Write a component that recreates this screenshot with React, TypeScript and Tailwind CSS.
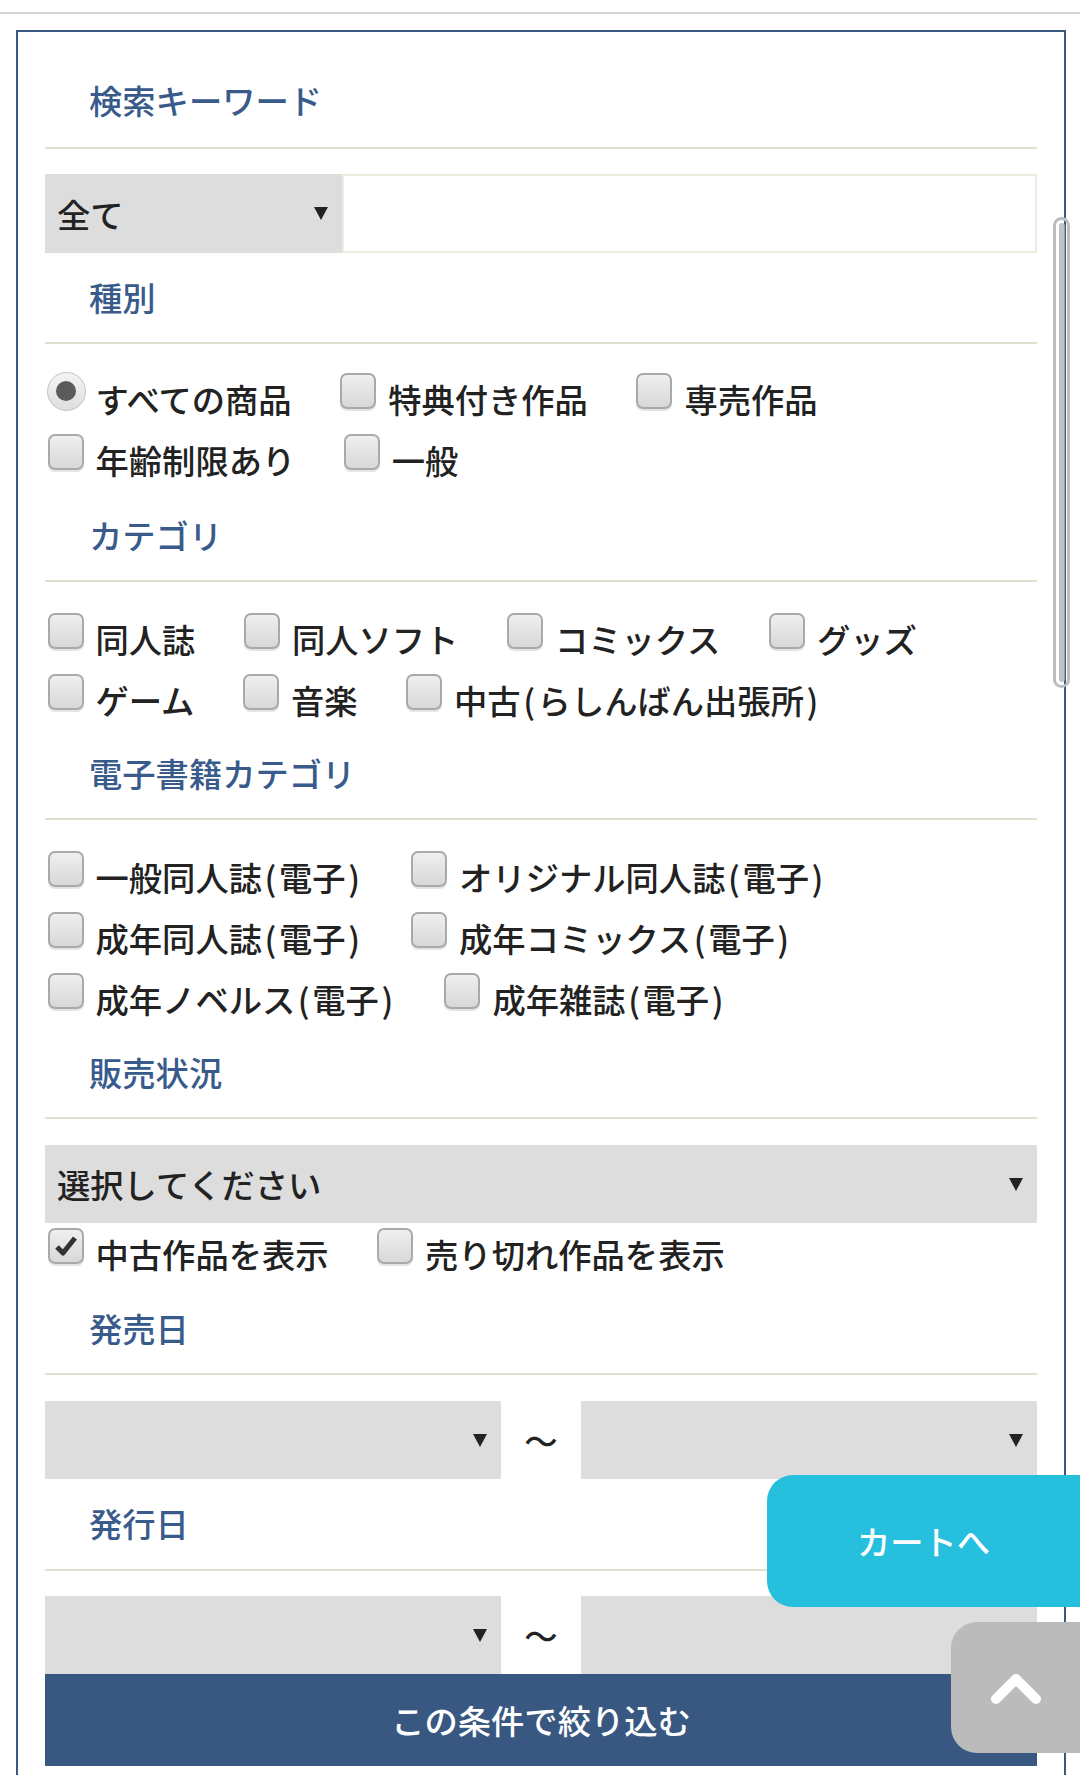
import React from "react";

const Tri = () => (
  <svg width="14" height="13" viewBox="0 0 14 13">
    <path d="M0 0h14L7 13z" fill="#222" />
  </svg>
);

// splits half-width parens out so they get the wider spacing of the original font
const Label = ({ text }: { text: string }) => {
  const parts = text.split(/([()])/);
  return (
    <span className="whitespace-nowrap">
      {parts.map((p, i) =>
        p === "(" || p === ")" ? (
          <span key={i} className="inline-block w-[17px] text-center">
            {p}
          </span>
        ) : (
          <span key={i}>{p}</span>
        )
      )}
    </span>
  );
};

const Box = ({ checked = false }: { checked?: boolean }) => (
  <span className="ml-[2.5px] mb-[16px] flex h-[36px] w-[36px] shrink-0 items-center justify-center rounded-[7px] border-2 border-[#a9a9a9] bg-gradient-to-b from-[#efefef] to-[#d8d8d8] shadow-[0_2px_0_#e4e4e4]">
    {checked && (
      <svg width="26" height="24" viewBox="0 0 26 24">
        <path d="M4 13l6 6L22 4" fill="none" stroke="#333" strokeWidth="5" strokeLinejoin="round" />
      </svg>
    )}
  </span>
);

const Radio = () => (
  <span className="ml-[1.5px] mb-[16px] flex h-[39px] w-[39px] shrink-0 items-center justify-center rounded-full border border-[#c2c2c2] bg-gradient-to-b from-[#f4f4f4] to-[#dedede]">
    <span className="h-[20px] w-[20px] rounded-full bg-[#5b5b5b]" />
  </span>
);

const Item = ({ text, checked, radio }: { text: string; checked?: boolean; radio?: boolean }) => (
  <div className="mr-[46px] flex h-[61px] items-center">
    {radio ? <Radio /> : <Box checked={checked} />}
    <span className={radio ? "ml-[10px]" : "ml-[12px]"}>
      <Label text={text} />
    </span>
  </div>
);

const Heading = ({ children, className }: { children: React.ReactNode; className: string }) => (
  <div className={`border-b-2 border-[#e2dfd0] ${className}`}>
    <div className="pl-[44px] leading-[48px] text-[#385b8b]">{children}</div>
  </div>
);

const Select = ({ text, className }: { text?: string; className?: string }) => (
  <div className={`flex h-[78px] items-center justify-between bg-[#dddddd] pl-[12px] pr-[14px] text-[#222] ${className ?? ""}`}>
    <span>{text}</span>
    <Tri />
  </div>
);

const DateRow = ({ className }: { className: string }) => (
  <div className={`grid grid-cols-[1fr_80px_1fr] ${className}`}>
    <Select className="pr-[12px]" />
    <div className="flex items-center justify-center text-[#222]">〜</div>
    <Select />
  </div>
);

export default function App() {
  return (
    <div className="relative h-[1775px] w-[1080px] overflow-hidden bg-white font-[family-name:'Noto_Sans_CJK_JP','Noto_Sans',sans-serif] text-[33.3px] font-medium text-[#222]">
      <div className="pt-[12px]">
        <div className="h-[2px] bg-[#d6d6d6]" />
      </div>

      <div className="ml-[16px] mr-[14px] mt-[16px] border-2 border-[#385882] px-[27px] pb-[40px]">
        <Heading className="pt-[44px] pb-[23px]">検索キーワード</Heading>
        <div className="mt-[25px] flex h-[79px]">
          <div className="flex w-[297px] items-center justify-between bg-[#dddddd] pl-[12px] pr-[14px]">
            <span>全て</span>
            <Tri />
          </div>
          <div className="flex-1 border-2 border-[#efecdf] bg-white" />
        </div>

        <Heading className="mt-[20px] pb-[21px]">種別</Heading>
        <div className="flex flex-wrap pt-[24.5px]">
          <Item text="すべての商品" radio />
          <Item text="特典付き作品" />
          <Item text="専売作品" />
          <Item text="年齢制限あり" />
          <Item text="一般" />
        </div>

        <Heading className="mt-[20.5px] pb-[21px]">カテゴリ</Heading>
        <div className="flex flex-wrap pt-[26.5px]">
          <Item text="同人誌" />
          <Item text="同人ソフト" />
          <Item text="コミックス" />
          <Item text="グッズ" />
          <Item text="ゲーム" />
          <Item text="音楽" />
          <Item text="中古(らしんばん出張所)" />
        </div>

        <Heading className="mt-[18.5px] pb-[21px]">電子書籍カテゴリ</Heading>
        <div className="flex flex-wrap pt-[26.5px]">
          <Item text="一般同人誌(電子)" />
          <Item text="オリジナル同人誌(電子)" />
          <Item text="成年同人誌(電子)" />
          <Item text="成年コミックス(電子)" />
          <Item text="成年ノベルス(電子)" />
          <Item text="成年雑誌(電子)" />
        </div>

        <Heading className="mt-[18.5px] pb-[21px]">販売状況</Heading>
        <Select text="選択してください" className="mt-[26px]" />
        <div className="flex flex-wrap">
          <Item text="中古作品を表示" checked />
          <Item text="売り切れ作品を表示" />
        </div>

        <Heading className="mt-[20px] pb-[21px]">発売日</Heading>
        <DateRow className="mt-[26px]" />

        <Heading className="mt-[20px] pb-[22px]">発行日</Heading>
        <DateRow className="mt-[25px]" />

        <button className="flex h-[92px] w-full items-center justify-center bg-[#385882] text-white">
          この条件で絞り込む
        </button>
      </div>

      {/* scroll indicator */}
      <div className="absolute left-[1053px] top-[217px] flex h-[471px] w-[17px] justify-center rounded-full border-[3px] border-[#bdbdbd] py-[3px]">
        <div className="w-[6px] rounded-full bg-[#b3b3b3]/80" />
      </div>

      {/* floating buttons */}
      <button className="absolute left-[767px] top-[1475px] flex h-[132px] w-[313px] items-center justify-center rounded-l-[26px] bg-[#26bfdd] text-white">
        カートへ
      </button>
      <button className="absolute left-[951px] top-[1622px] flex h-[131px] w-[129px] items-center justify-center rounded-l-[26px] bg-[#bbbbbb]">
        <svg width="52" height="36" viewBox="0 0 52 36">
          <path d="M6 29L26 9l20 20" fill="none" stroke="#fff" strokeWidth="10" strokeLinejoin="round" strokeLinecap="round" />
        </svg>
      </button>
    </div>
  );
}
